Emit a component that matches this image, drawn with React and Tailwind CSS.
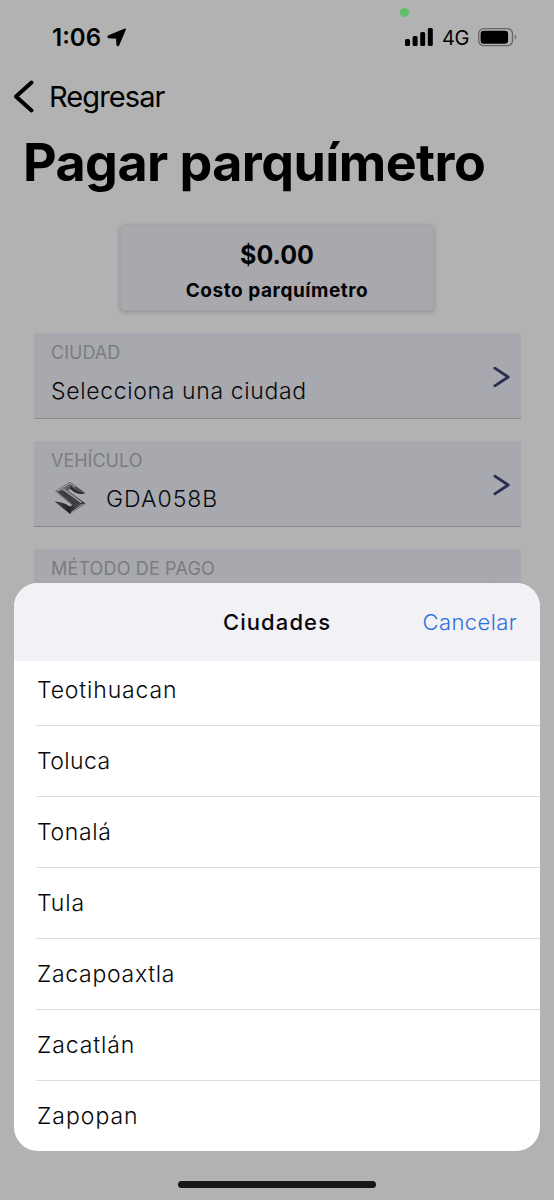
const cities = [
  { name: "Teotihuacan", tracking: "tracking-[0.85px]" },
  { name: "Toluca", tracking: "tracking-[0.4px]" },
  { name: "Tonalá", tracking: "tracking-[0.65px]" },
  { name: "Tula", tracking: "tracking-[0.9px]" },
  { name: "Zacapoaxtla", tracking: "tracking-[0.7px]" },
  { name: "Zacatlán", tracking: "tracking-[0.9px]" },
  { name: "Zapopan", tracking: "tracking-[1px]" },
];

const StatusBar = () => (
  <div className="relative h-[74px] flex items-center justify-between pl-[52px] pr-[37px]">
    {/* camera in use dot */}
    <span className="absolute top-[8px] left-[400px] w-[9px] h-[9px] rounded-full bg-[#5fbf66]"></span>
    <div className="flex items-center gap-[6px]">
      <span className="mt-px text-[24px] leading-none font-semibold">1:06</span>
      <svg width="20" height="19" viewBox="0 0 20 19">
        <path d="M18.2 1.3 11.6 16.8Q10.7 18.3 10.2 16.8L9.9 9.9 1.9 9.5Q.5 8.8 1.7 8.1Z" fill="#000" stroke="#000" strokeWidth="1.6" strokeLinejoin="round" />
      </svg>
    </div>
    <div className="flex items-center">
      <svg width="28" height="18" viewBox="0 0 28 18">
        <rect x="0" y="11" width="5" height="7" rx="1.5" />
        <rect x="7.6" y="8" width="5" height="10" rx="1.5" />
        <rect x="15.2" y="4" width="5" height="14" rx="1.5" />
        <rect x="22.8" y="0" width="5" height="18" rx="1.5" />
      </svg>
      <span className="ml-[9px] mt-px w-[27px] text-[20px] leading-none tracking-[-0.3px] whitespace-nowrap">4G</span>
      <svg className="ml-[9px]" width="39" height="19" viewBox="0 0 39 19">
        <rect x="0.7" y="0.7" width="33.8" height="17" rx="5" fill="none" stroke="#66666a" strokeWidth="1.3" />
        <rect x="2.6" y="2.7" width="27.5" height="13" rx="3.2" />
        <path d="M36.8 6.6q3 2.5 0 5z" fill="#66666a" />
      </svg>
    </div>
  </div>
);

const SuzukiLogo = () => (
  <svg className="ml-[3px]" width="32" height="34" viewBox="0 0 32 34">
    <defs>
      <linearGradient id="steelTop" x1="0" y1="0" x2="1" y2="0.7">
        <stop offset="0" stopColor="#7c7d80" />
        <stop offset="0.5" stopColor="#55565a" />
        <stop offset="1" stopColor="#2f3033" />
      </linearGradient>
      <linearGradient id="steelBottom" x1="0" y1="0" x2="1" y2="0">
        <stop offset="0" stopColor="#4a4b4e" />
        <stop offset="0.45" stopColor="#1f2023" />
        <stop offset="1" stopColor="#77787b" />
      </linearGradient>
    </defs>
    <path d="M16 .8 .8 10 18.5 24.2 15.8 25.8Q9 21 .8 20.6L16 32.8 31.5 22.4 14 9.6 16.6 8Q23 14.6 31.5 12.2Z" fill="url(#steelTop)" />
    <path d="M.8 20.6Q9 21 15.8 25.8L18.5 24.2 31.5 22.4 16 32.8Z" fill="url(#steelBottom)" />
    <path d="M3.6 10.6 9 9.6 27 22.4 20 23.2Z" fill="#3d3e41" />
    <path d="M9 7.8 27.5 21.6" fill="none" stroke="#97989b" strokeWidth="1.6" />
    <path d="M16.5 4.4Q22 11.4 30 12.4 23 14.2 16.6 8Z" fill="#242528" />
    <path d="M3 10 16 2.2 21 6M17 31.6 28.5 23.4" fill="none" stroke="#a9aaad" strokeWidth="1" />
  </svg>
);

const Field = ({ label, labelClass, children }) => (
  <div className="h-[86px] bg-[#a8a9ae] border-b-[1.5px] border-[#88898d] flex items-center justify-between pl-[17px] pr-[11px]">
    <div className="h-full flex flex-col">
      <span className={`mt-[10px] text-[18px] leading-5 text-[#7b7c80] ${labelClass}`}>{label}</span>
      <div className="mt-[9px] h-[36px] flex items-center text-[23px] font-light text-[#08090d]">{children}</div>
    </div>
    <svg className="mt-[2px]" width="17" height="22" viewBox="0 0 17 22" fill="none" stroke="#292d51" strokeWidth="2.8" strokeLinecap="round" strokeLinejoin="round">
      <path d="M1.8 2.2 15.2 11 1.8 19.8" />
    </svg>
  </div>
);

const CitySheet = () => (
  <div className="absolute left-[14px] right-[14px] bottom-[49px] h-[568px] rounded-[24px] bg-white overflow-hidden flex flex-col">
    <div className="h-[78px] shrink-0 bg-[#f1f1f6] grid grid-cols-3 items-center pt-px pr-[23px] pl-[23px] text-[22px]">
      <span className="col-start-2 text-center font-medium text-[#08090d] tracking-[1.1px] whitespace-nowrap">Ciudades</span>
      <span className="text-right font-light text-[#2f70e0] tracking-[0.4px]">Cancelar</span>
    </div>
    {/* list is scrolled to its end, so the first row sits slightly under the header */}
    <div className="flex-1 flex flex-col justify-end pl-[22px] overflow-hidden">
      {cities.map(({ name, tracking }) => (
        <div
          key={name}
          className={`h-[71px] shrink-0 flex items-center pl-px border-t border-[#dddddf] text-[23px] font-light text-[#08080b] ${tracking}`}
        >
          {name}
        </div>
      ))}
    </div>
  </div>
);

const App = () => {
  return (
    <div className="relative w-[554px] h-[1200px] overflow-hidden bg-[#b2b2b2] text-black font-['Inter',sans-serif]">
      <StatusBar />
      <div className="h-[46px] flex items-center">
        <svg className="ml-[12px] -mt-[2px]" width="22" height="35" viewBox="0 0 22 35" fill="none" stroke="#000" strokeWidth="4" strokeLinecap="round" strokeLinejoin="round">
          <path d="M19.5 3.5 4 17.5 19.5 31.5" />
        </svg>
        <span className="ml-[15px] -mt-[2px] text-[29px] leading-none tracking-[-0.9px]">Regresar</span>
      </div>
      <h1 className="h-[105px] pt-[13px] pl-[23px] text-[52px] leading-[60px] font-bold tracking-[-0.55px] whitespace-nowrap">Pagar parquímetro</h1>

      <div className="w-[314px] h-[86px] mx-auto rounded-[4px] border border-[#a1a2a9] bg-[#a8a8ad] shadow-[0_1px_4px_rgba(0,0,0,0.22)] flex flex-col items-center pt-[14px] font-bold text-[#020305]">
        <span className="text-[25px] leading-[30px]">$0.00</span>
        <span className="mt-[9px] text-[19px] leading-6 tracking-[0.55px]">Costo parquímetro</span>
      </div>

      <div className="mt-[22px] pl-[34px] pr-[33px] flex flex-col gap-[22px]">
        <Field label="CIUDAD" labelClass="">
          <span className="mt-[2px] tracking-[0.65px]">Selecciona una ciudad</span>
        </Field>
        <Field label="VEHÍCULO" labelClass="">
          <SuzukiLogo />
          <span className="mt-[2px] ml-[20px] tracking-[1px]">GDA058B</span>
        </Field>
        <Field label="MÉTODO DE PAGO" labelClass="tracking-[0.15px]" />
      </div>

      <CitySheet />
      <div className="absolute bottom-[12px] left-[178px] w-[198px] h-[7px] rounded-full bg-[#161616]"></div>
    </div>
  );
};

export default App;
